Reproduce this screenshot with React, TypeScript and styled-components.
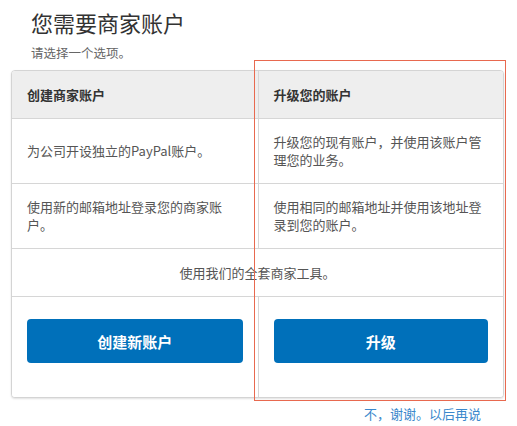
import { FC } from "react"
import styled, { createGlobalStyle } from "styled-components"

const GlobalStyle = createGlobalStyle`
  html, body {
    margin: 0;
    padding: 0;
    background: #fff;
  }
  body {
    font-family: "Noto Sans CJK SC", "Liberation Sans", sans-serif;
    color: #333;
  }
`

export const Page = styled.div`
  position: relative;
  width: 517px;
  height: 426px;
  padding: 8px 13px 0 11px;
  box-sizing: border-box;
`

export const Intro = styled.div`
  padding-left: 20px;
  margin-bottom: 9px;
`

export const Title = styled.h1`
  margin: 0 0 9px;
  font-size: 22px;
  line-height: 28px;
  font-weight: 400;
  color: #333;
`

export const Subtitle = styled.p`
  margin: 0;
  font-size: 12.5px;
  line-height: 16px;
  color: #666;
`

export const Card = styled.div`
  border: 1px solid #d4d4d4;
  border-radius: 4px;
  box-shadow: 0 1px 2px rgba(0, 0, 0, 0.12);
  overflow: hidden;
  background: #fff;
`

export const Row = styled.div<{ $height: number; $header?: boolean; $last?: boolean }>`
  display: grid;
  grid-template-columns: 1fr 1fr;
  height: ${(p) => p.$height}px;
  box-sizing: border-box;
  background: ${(p) => (p.$header ? "#eeeeee" : "#fff")};
  border-bottom: ${(p) => (p.$last ? "none" : "1px solid #d6d6d6")};
`

export const Cell = styled.div<{ $header?: boolean }>`
  display: flex;
  align-items: center;
  padding: 0 15px;
  font-size: 13px;
  line-height: 18px;
  font-weight: ${(p) => (p.$header ? 700 : 400)};
  color: ${(p) => (p.$header ? "#333" : "#555")};

  & + & {
    border-left: 1px solid #d6d6d6;
  }
`

export const WideCell = styled.div`
  grid-column: 1 / span 2;
  display: flex;
  align-items: center;
  justify-content: center;
  font-size: 13px;
  line-height: 18px;
  color: #555;
`

export const ButtonCell = styled.div`
  padding: 22px 15px 0;

  & + & {
    border-left: 1px solid #d6d6d6;
  }
`

export const Button = styled.button`
  display: block;
  width: 100%;
  height: 44px;
  border: none;
  border-radius: 4px;
  background: #0070ba;
  color: #fff;
  font-family: "Noto Sans CJK SC", "Liberation Sans", sans-serif;
  font-size: 15px;
  font-weight: 700;
  cursor: pointer;
`

export const Footer = styled.div`
  display: flex;
  justify-content: flex-end;
  padding-right: 23px;
  margin-top: 7px;
`

export const Later = styled.a`
  font-size: 13px;
  line-height: 18px;
  color: #3a88cc;
  text-decoration: none;
`

// annotation frame drawn over the right column
export const Highlight = styled.div`
  position: absolute;
  left: 254px;
  top: 60px;
  width: 252px;
  height: 341px;
  box-sizing: border-box;
  border: 1px solid #e8694f;
  pointer-events: none;
`

const App: FC = () => {
  return (
    <>
      <GlobalStyle />
      <Page>
        <Intro>
          <Title>您需要商家账户</Title>
          <Subtitle>请选择一个选项。</Subtitle>
        </Intro>

        <Card>
          <Row $height={48} $header>
            <Cell $header>创建商家账户</Cell>
            <Cell $header>升级您的账户</Cell>
          </Row>
          <Row $height={65}>
            <Cell>为公司开设独立的PayPal账户。</Cell>
            <Cell>升级您的现有账户，并使用该账户管理您的业务。</Cell>
          </Row>
          <Row $height={65}>
            <Cell>使用新的邮箱地址登录您的商家账户。</Cell>
            <Cell>使用相同的邮箱地址并使用该地址登录到您的账户。</Cell>
          </Row>
          <Row $height={48}>
            <WideCell>使用我们的全套商家工具。</WideCell>
          </Row>
          <Row $height={100} $last>
            <ButtonCell>
              <Button>创建新账户</Button>
            </ButtonCell>
            <ButtonCell>
              <Button>升级</Button>
            </ButtonCell>
          </Row>
        </Card>

        <Footer>
          <Later href="#">不，谢谢。以后再说</Later>
        </Footer>

        <Highlight />
      </Page>
    </>
  )
}

export default App
